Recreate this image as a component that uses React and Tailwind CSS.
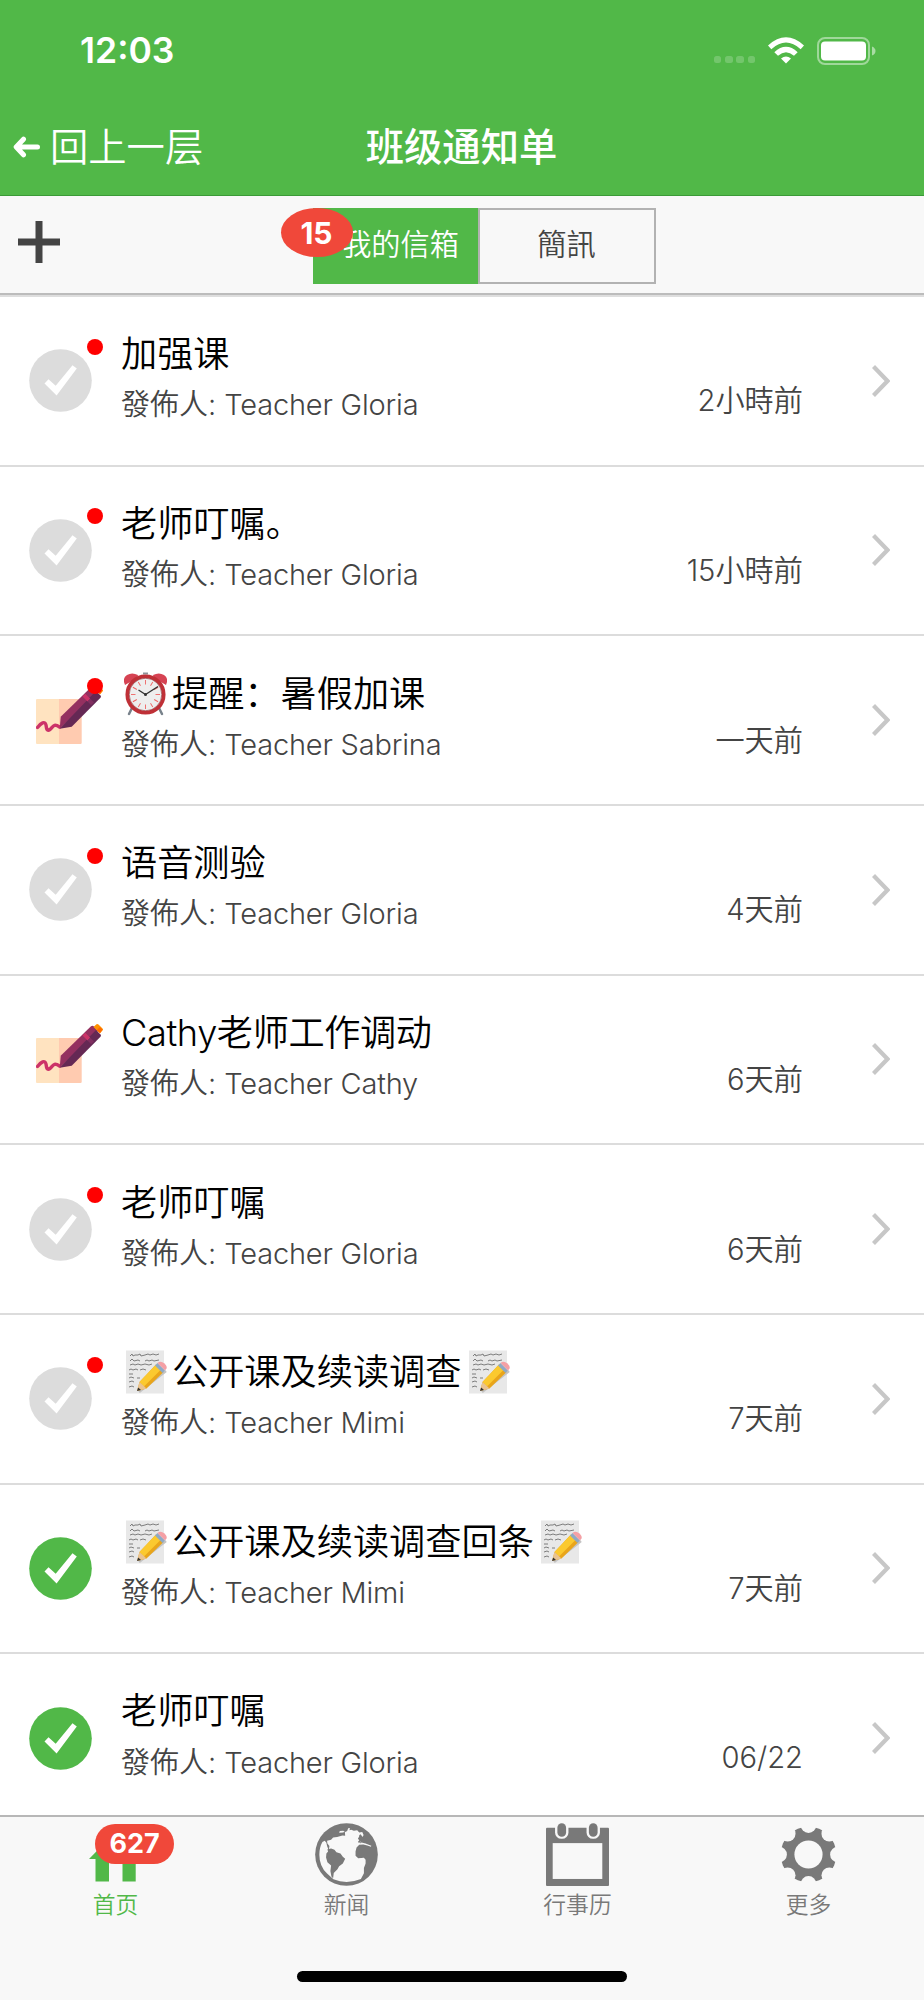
import React from 'react';

const GRAY = '#797979';
const GREEN = '#51b848';

const messages = [
  { id: 1, icon: 'read', unread: true, title: '加强课', author: 'Teacher Gloria', time: '2小時前' },
  { id: 2, icon: 'read', unread: true, title: '老师叮嘱。', author: 'Teacher Gloria', time: '15小時前' },
  { id: 3, icon: 'sign', unread: true, before: 'alarm', title: '提醒：暑假加课', author: 'Teacher Sabrina', time: '一天前' },
  { id: 4, icon: 'read', unread: true, title: '语音测验', author: 'Teacher Gloria', time: '4天前' },
  { id: 5, icon: 'sign', unread: false, title: 'Cathy老师工作调动', author: 'Teacher Cathy', time: '6天前' },
  { id: 6, icon: 'read', unread: true, title: '老师叮嘱', author: 'Teacher Gloria', time: '6天前' },
  { id: 7, icon: 'read', unread: true, before: 'memo', after: 'memo', title: '公开课及续读调查', author: 'Teacher Mimi', time: '7天前' },
  { id: 8, icon: 'done', unread: false, before: 'memo', after: 'memo', title: '公开课及续读调查回条', author: 'Teacher Mimi', time: '7天前' },
  { id: 9, icon: 'done', unread: false, title: '老师叮嘱', author: 'Teacher Gloria', time: '06/22' },
];

function App() {
  return (
    <div className="h-[2000px] w-[924px] flex flex-col overflow-hidden bg-white font-['Inter','Noto_Sans_CJK_SC',sans-serif]">
      <header className="h-[196px] shrink-0 bg-[#51b848] border-b border-[#3b9a37] text-white flex flex-col">
        <StatusBar />
        <NavBar />
      </header>
      <Toolbar />
      <main className="flex-1 min-h-0 overflow-hidden border-t-2 border-[#dedede]">
        {messages.map((m) => (
          <MessageRow key={m.id} message={m} />
        ))}
      </main>
      <TabBar />
    </div>
  );
}

function StatusBar() {
  return (
    <div className="h-[101px] shrink-0 flex items-center justify-between pl-[80px] pr-[48px]">
      <span className="text-[35.5px] leading-none font-semibold mt-px">12:03</span>
      <div className="flex items-center">
        <div className="flex gap-[3.7px] mt-[18px] mr-[13px]">
          {[0, 1, 2, 3].map((i) => (
            <span key={i} className="size-[7.5px] rounded-[2.5px] bg-white/20" />
          ))}
        </div>
        <svg className="w-[36px] h-[27px] mr-[13px]" viewBox="0 0 108 80" fill="#fff">
          <path d="M0 25Q54 -24 108 25L98 36Q54 -4 10 36Z" />
          <path d="M19 45Q54 13 89 45L78 56Q54 34 30 56Z" />
          <path d="M39 64Q54 52 69 64L54 79Z" />
        </svg>
        <svg className="w-[59px] h-[28px]" viewBox="0 0 59 28">
          <rect x="1" y="1" width="51" height="26" rx="7" fill="none" stroke="#fff" strokeOpacity=".45" strokeWidth="2" />
          <rect x="4" y="4.5" width="45" height="19" rx="4" fill="#fff" />
          <path d="M55 9.5Q58.5 11 58.5 14T55 18.500Z" fill="#fff" fillOpacity=".5" />
        </svg>
      </div>
    </div>
  );
}

function NavBar() {
  return (
    <div className="flex-1 grid grid-cols-[1fr_auto_1fr] items-center text-[38.3px] leading-none">
      <div className="flex items-center pl-[13px] font-[350]">
        <svg className="w-[27px] h-[22px] mr-[10px] -mt-[2px]" viewBox="0 0 27 22" fill="none" stroke="#fff" strokeWidth="5" strokeLinecap="round" strokeLinejoin="round">
          <path d="M24.500 11H3.500M10.500 3.200L3.200 11L10.500 18.800" />
        </svg>
        <span className="-mt-px">回上一层</span>
      </div>
      <h1 className="font-medium -mt-px -ml-px">班级通知单</h1>
      <span />
    </div>
  );
}

function Toolbar() {
  return (
    <div className="h-[99px] shrink-0 flex items-start bg-[#f8f8f8] border-b-2 border-[#bcbcbc] pt-[12px] pl-[18px]">
      <svg className="size-[42px] mt-[13px] mr-[252.5px]" viewBox="0 0 42 42" fill="#444">
        <path d="M17.500 0H24.500V17.500H42V24.500H24.500V42H17.500V24.500H0V17.500H17.500Z" />
      </svg>
      <div className="flex h-[76px] text-[29.2px] leading-none font-['Inter','Noto_Sans_CJK_TC',sans-serif] relative">
        <button className="w-[165px] pl-[11px] pb-[2px] bg-[#51b848] text-white font-[350] font-['Inter','Noto_Sans_CJK_SC',sans-serif]">我的信箱</button>
        <button className="w-[178px] pb-[2px] border-2 border-[#b2b2b2] text-[#444] font-[350]">簡訊</button>
        <span className="absolute -left-[32px] top-0 w-[72px] h-[49px] rounded-[50%] bg-[#f0483a] text-white text-[30px] font-bold flex items-center justify-center">
          15
        </span>
      </div>
    </div>
  );
}

function MessageRow({ message }) {
  const { icon, unread, before, after, title, author, time } = message;
  return (
    <div className="h-[169.67px] border-b-2 border-[#dcdcdc] flex items-center">
      <div className="w-[121px] shrink-0 relative flex items-center h-[62px]">
        {icon === 'sign' ? <SignIcon /> : <CheckIcon color={icon === 'done' ? GREEN : '#dcdcdc'} />}
        {unread && <span className="absolute left-[87px] -top-[11px] size-[16px] rounded-full bg-[#ff0000]" />}
      </div>
      <div className="flex-1 -mt-[2px]">
        <div className="flex items-center h-[50px] text-[36.2px] leading-none text-black font-[350]">
          {before && <Emoji name={before} />}
          <span className={title.startsWith('Cathy') ? 'whitespace-nowrap tracking-[-0.4px]' : 'whitespace-nowrap'}>{title}</span>
          {after && <span className="ml-[2px] flex"><Emoji name={after} /></span>}
        </div>
        <p className="h-[51px] flex items-center text-[29px] leading-none text-[#444] whitespace-pre font-[350] font-['Inter','Noto_Sans_CJK_TC',sans-serif]">
          發佈人: <span className="tracking-[-0.2px]">{author}</span>
        </p>
      </div>
      <span className="mt-[40px] mr-[69px] text-[29.2px] leading-none text-[#444] font-[350] font-['Inter','Noto_Sans_CJK_TC',sans-serif]">{time}</span>
      <svg className="w-[18px] h-[32px] mr-[34px] shrink-0" viewBox="0 0 18 32" fill="none" stroke="#c7c7c7" strokeWidth="4.2">
        <path d="M1.500 1.500L15.500 16L1.500 30.500" />
      </svg>
    </div>
  );
}

function CheckIcon({ color }) {
  return (
    <svg className="size-[63px] ml-[29px]" viewBox="-31.500 -31.500 63 63">
      <circle r="31.300" fill={color} />
      <path d="M-16 3L-12 -1.300L-4.800 5.300L12 -15.300L16.300 -12L-3.900 15Z" fill="#fff" />
    </svg>
  );
}

// sticky note with a marker, used for notices that need a signature
function SignIcon() {
  return (
    <svg className="w-[68px] h-[60px] ml-[36px] -mt-[13px]" viewBox="0 0 68 60">
      <path d="M1 15H23V60H1Q0 60 0 59V16Q0 15 1 15Z" fill="#ffe3c0" />
      <path d="M23 15H44.500Q45.700 15 45.700 16V59Q45.700 60 44.500 60H23Z" fill="#ffcbb0" />
      <path d="M1.500 43.500C5 39 9 36.500 10 41C10.500 45 11 47.500 14 45.500C17 43 17.500 39 23.500 43" fill="none" stroke="#cc3368" strokeWidth="3.400" strokeLinecap="round" />
      <path d="M23.700 44.700L24.700 32.700L55 3.300Q56.500 2 58 3.500L62 8Z" fill="#943060" />
      <path d="M23.700 44.700L60 7L64.500 11.500Q65.500 12.500 64.500 13.700L35.700 42.700Z" fill="#652854" />
      <path d="M46.500 12.500L49.300 9.800L54.200 14.700L51.500 17.500Z" fill="#cc3368" />
      <path d="M51.500 17.500L54.200 14.700L58 18.500L55.200 21.200Z" fill="#802f60" />
      <path d="M57.500 4L60.500 1.200Q61.500 .5 62.500 1.500L66.500 5.500Q67.500 6.500 66.700 7.200L64 10.300Z" fill="#ff9100" />
      <path d="M60.700 7.200L63.800 4L66.500 6.600L64 10.300Z" fill="#ff6c00" />
    </svg>
  );
}

function Emoji({ name }) {
  return name === 'alarm' ? <AlarmEmoji /> : <MemoEmoji />;
}

function AlarmEmoji() {
  const ticks = [0, 30, 60, 90, 120, 150, 180, 210, 240, 270, 300, 330];
  return (
    <svg className="w-[51px] h-[44px] shrink-0" viewBox="0 0 51 44" role="img" aria-label="⏰">
      <path d="M11 36L8 42M38 36L41 42" stroke="#78828b" strokeWidth="2.500" strokeLinecap="round" />
      <path d="M22 1.500H27" stroke="#8e9399" strokeWidth="2" />
      <path d="M4 13Q1 6 6 3Q11 0 17 3L16 6Z" fill="#d64353" />
      <path d="M45 13Q48 6 43 3Q38 0 32 3L33 6Z" fill="#d64353" />
      <circle cx="24.500" cy="22.500" r="18.200" fill="#eeeeee" stroke="#bf3037" strokeWidth="3.700" />
      <circle cx="24.500" cy="22.500" r="16.300" fill="none" stroke="#8d3438" strokeWidth=".6" />
      {ticks.map((a) => (
        <path key={a} d="M24.500 8V12.500" stroke="#ee6262" strokeWidth=".9" transform={`rotate(${a} 24.500 22.500)`} />
      ))}
      <path d="M17.500 18L24.500 22.500L37 14.500" fill="none" stroke="#333" strokeWidth="1.400" />
      <circle cx="24.500" cy="22.500" r="1.500" fill="#333" />
    </svg>
  );
}

function MemoEmoji() {
  return (
    <svg className="w-[51px] h-[44px] shrink-0" viewBox="0 0 51 44" role="img" aria-label="📝">
      <rect x="5" y=".5" width="38" height="43" fill="#e8e8e8" />
      <path
        d="M9 6l2-2 1 2 2-1h3l2-1 1 2 4-1 3-1 2 1 3-1 3 1 3-1M9 11l2-2 2 2 4-1 2 1M24 11l2-1 2 1 3-1 2 1 5-1M9 15l3-1 2 1 3-1 3 1 4-1 4 1 3-1M8 20l2-1 2 1 3-1 2 1M19 20l3-1 3 1M8 24h4M8 28l2-1 3 1M8 32l3-1 2 1M8 37l3-1 2 1M16 28h3"
        fill="none"
        stroke="#707070"
        strokeWidth=".9"
      />
      <path d="M18 42L45 21" stroke="#c4c4c4" strokeWidth="2.500" />
      <path d="M16 41L18.500 32L35 14.500L42.500 22L25.500 38.500Z" fill="#e9a51a" />
      <path d="M18.500 32L35 14.500L40 19.500L23 36.500Z" fill="#fbc92f" />
      <path d="M16 41L18.500 32L25.500 38.500Z" fill="#e9c391" />
      <path d="M16 41L17.200 37.500L20 40Z" fill="#333" />
      <path d="M34 15.500L36.500 13L44 20.500L41.500 23Z" fill="#8fa9c4" />
      <path d="M36.500 13L38 12Q40.500 11 43.500 13.500Q46.500 16.500 45.500 18.500L44 20.500Z" fill="#f4a0a5" />
    </svg>
  );
}

function TabBar() {
  return (
    <nav className="h-[185px] shrink-0 bg-[#f8f8f8] border-t-2 border-[#b7b7b7] flex flex-col justify-between">
      <div className="grid grid-cols-4 pt-[6px]">
        <Tab label="首页" active badge="627"><HomeIcon /></Tab>
        <Tab label="新闻"><EarthIcon /></Tab>
        <Tab label="行事历"><CalendarIcon /></Tab>
        <Tab label="更多"><GearIcon /></Tab>
      </div>
      <div className="w-[330px] h-[11px] mb-[18px] self-center rounded-full bg-black" />
    </nav>
  );
}

function Tab({ label, active, badge, children }) {
  return (
    <div className={`flex flex-col items-center relative ${active ? 'text-[#51b848]' : 'text-[#797979]'}`}>
      {children}
      <span className="mt-[8px] text-[22.8px] leading-none font-[350]">{label}</span>
      {badge && (
        <span className="absolute left-[95px] top-px w-[79px] h-[40px] rounded-full bg-[#f0483a] text-white text-[27px] font-bold flex items-center justify-center">
          {badge}
        </span>
      )}
    </div>
  );
}

function HomeIcon() {
  return (
    <svg className="size-[63px]" viewBox="0 0 63 63" fill={GREEN}>
      <path d="M31.500 9L58 36H51.700V58.500H38.500V38H25V58.500H11.500V36H5Z" />
    </svg>
  );
}

function EarthIcon() {
  return (
    <svg className="size-[63px]" viewBox="14 15 188 188">
      <circle cx="108" cy="109" r="93.500" fill={GRAY} />
      <path
        d="M36 72L43 68L48 74L50 84L55 97L57 84L51 76L50 68L62 65L68 58L80 57L96 52L104 53L103 40L98 43L86 44L88 39L98 38L104 42L110 39L113 31L118 30L117 37L122 35L130 38L140 37L146 43L155 42L159 51L156 57L148 50L145 57L142 62L150 70L148 76L153 73L165 76L182 83L181 86L170 82L158 79L146 80L138 88L135 100L135 113L143 120L160 119L165 125L165 136L160 149L160 165L151 182Q109 199 69 183L50 166Q27 145 27 110Q27 88 36 72Z"
        fill="#f8f8f8"
      />
      <path d="M51 93L62 91L72 95L78 102L90 106L97 116L104 122L97 136L86 144L81 153L70 164L68 180L63 175L60 158L62 142L51 132L47 118L48 106L53 100Z" fill={GRAY} />
      <path d="M148 50L158 64M144 73L153 61" stroke={GRAY} strokeWidth="5" />
    </svg>
  );
}

function CalendarIcon() {
  return (
    <svg className="size-[63px]" viewBox="0 0 188 188" fill={GRAY}>
      <rect y="14" width="188" height="174" rx="3" />
      <rect x="20" y="60" width="148" height="107" fill="#f8f8f8" />
      <rect x="27" y="-6" width="40" height="53" rx="19" fill="#f8f8f8" />
      <rect x="121" y="-6" width="40" height="53" rx="19" fill="#f8f8f8" />
      <rect x="34" y="1" width="26" height="40" rx="13" />
      <rect x="128" y="1" width="26" height="40" rx="13" />
    </svg>
  );
}

function GearIcon() {
  const notches = [0, 45, 90, 135, 180, 225, 270, 315];
  return (
    <svg className="size-[63px]" viewBox="-94 -94 188 188">
      <circle r="83" fill={GRAY} />
      <circle r="42" fill="#f8f8f8" />
      {notches.map((a) => (
        <circle key={a} cy="-88" r="23.500" fill="#f8f8f8" transform={`rotate(${a})`} />
      ))}
    </svg>
  );
}

export default App;
